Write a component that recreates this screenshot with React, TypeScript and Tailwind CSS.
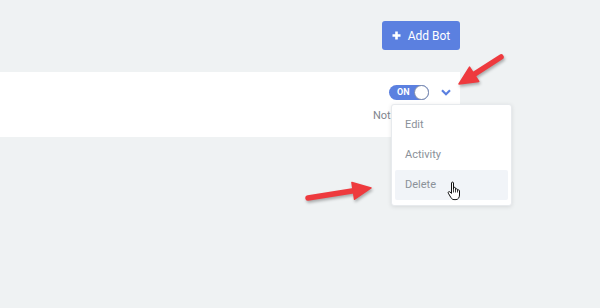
import React from 'react';

type Pt = [number, number];

const arrowHead = (tail: Pt, tip: Pt, len: number, half: number) => {
  const dx = tip[0] - tail[0];
  const dy = tip[1] - tail[1];
  const d = Math.hypot(dx, dy);
  const ux = dx / d;
  const uy = dy / d;
  const bx = tip[0] - ux * len;
  const by = tip[1] - uy * len;
  const pts = [
    [tip[0], tip[1]],
    [bx - uy * half, by + ux * half],
    [bx + uy * half, by - ux * half],
  ];
  return { points: pts.map((p) => p.join(',')).join(' '), base: [bx + ux * 2, by + uy * 2] as Pt };
};

const Arrow: React.FC<{ tail: Pt; tip: Pt }> = ({ tail, tip }) => {
  const head = arrowHead(tail, tip, 18, 8.5);
  return (
    <g>
      <line x1={tail[0]} y1={tail[1]} x2={head.base[0]} y2={head.base[1]} stroke="#ee3a3e" strokeWidth={5.5} strokeLinecap="round" />
      <polygon points={head.points} fill="#ee3a3e" strokeLinejoin="round" stroke="#ee3a3e" strokeWidth={1.5} />
    </g>
  );
};

const HandCursor: React.FC = () => (
  <svg width="15" height="20" viewBox="0 0 15 20" className="absolute left-[447px] top-[181px]">
    <path
      d="M4.5 2 C4.5 0.8 6.5 0.8 6.5 2 L6.5 8 L6.5 7.2 C6.5 6 8.5 6 8.5 7.2 L8.5 8.6 C8.5 7.5 10.5 7.5 10.5 8.6 L10.5 9.6 C10.5 8.6 12.5 8.6 12.5 9.8 L12.5 14 C12.5 16.6 11 18.6 9 18.6 L7 18.6 C5.6 18.6 4.6 17.8 3.8 16.4 L1.3 12.2 C0.7 11.1 1.9 10.1 2.9 10.9 L4.5 12.4 Z"
      fill="#fff"
      stroke="#111"
      strokeWidth="1"
      strokeLinejoin="round"
    />
    <path d="M6.5 8 L6.5 11.5 M8.5 8.6 L8.5 11.5 M10.5 9.6 L10.5 11.5" stroke="#111" strokeWidth="0.8" />
  </svg>
);

const App: React.FC = () => {
  return (
    <div className="relative w-[600px] h-[308px] overflow-hidden bg-[#eff2f3] font-['Roboto',sans-serif]">
      {/* header */}
      <div className="w-[460px] pt-[21px] flex justify-end">
        <button className="w-[78px] h-[29px] rounded-[3px] bg-[#5b80e0] text-white flex items-center justify-center gap-[7px] text-[12px]">
          <svg width="9" height="9" viewBox="0 0 9 9">
            <path d="M4.5 0.5 V8.5 M0.5 4.5 H8.5" stroke="#fff" strokeWidth="2.6" />
          </svg>
          <span>Add Bot</span>
        </button>
      </div>

      {/* bot card */}
      <div className="mt-[22px] w-[460px] h-[65px] bg-white flex justify-end pr-[9px] pt-[13px]">
        <div className="flex flex-col items-end">
          <div className="flex items-center gap-[12px]">
            <div className="relative w-[40px] h-[15px] rounded-full bg-[#5b80e0] flex items-center">
              <span className="pl-[8px] text-[9px] font-bold text-white leading-none">ON</span>
              <span className="absolute right-0 top-0 w-[15px] h-[15px] rounded-full bg-white border border-[#7d8aa8]" />
            </div>
            <svg width="10" height="7" viewBox="0 0 10 7">
              <polyline points="1,1.2 5,5.2 9,1.2" fill="none" stroke="#5b80e0" strokeWidth="2.2" />
            </svg>
          </div>
          <div className="w-[78px] mt-[9px] text-[11px] leading-[13px] text-[#7f858e]">Notifications</div>
        </div>
      </div>

      {/* dropdown menu */}
      <div className="absolute left-[391px] top-[104px] w-[121px] h-[102px] bg-white rounded-[3px] border border-[#e7eaed] shadow-[0_1px_4px_rgba(0,0,0,0.1)] px-[3px] py-[5px] flex flex-col">
        <div className="h-[30px] pl-[10px] flex items-center text-[11px] text-[#8b9199]">Edit</div>
        <div className="h-[30px] pl-[10px] flex items-center text-[11px] text-[#8b9199]">Activity</div>
        <div className="h-[30px] pl-[10px] flex items-center text-[11px] text-[#8b9199] bg-[#f1f4f8] rounded-[2px]">Delete</div>
      </div>

      <HandCursor />

      {/* annotation arrows */}
      <svg className="absolute inset-0 pointer-events-none" width="600" height="308" style={{ filter: 'drop-shadow(1px 2px 1.5px rgba(0,0,0,0.3))' }}>
        <Arrow tail={[501, 57]} tip={[459, 84]} />
        <Arrow tail={[308, 198]} tip={[371, 188]} />
      </svg>
    </div>
  );
};

export default App;
